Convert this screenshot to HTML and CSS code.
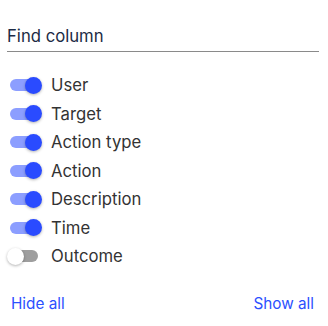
FILE: index.html
```html
<!DOCTYPE html>
<html>
<head>
<meta charset="utf-8">
<link rel="stylesheet" href="styles.css">
</head>
<body>
<div class="panel">
  <div class="search"><input class="search-input" type="text" placeholder="Find column"></div>
  <ul class="cols">
    <li class="col"><span class="switch on"><span class="track"></span><span class="knob"></span></span><span class="label">User</span></li>
    <li class="col"><span class="switch on"><span class="track"></span><span class="knob"></span></span><span class="label">Target</span></li>
    <li class="col"><span class="switch on"><span class="track"></span><span class="knob"></span></span><span class="label">Action type</span></li>
    <li class="col"><span class="switch on"><span class="track"></span><span class="knob"></span></span><span class="label">Action</span></li>
    <li class="col"><span class="switch on"><span class="track"></span><span class="knob"></span></span><span class="label">Description</span></li>
    <li class="col"><span class="switch on"><span class="track"></span><span class="knob"></span></span><span class="label">Time</span></li>
    <li class="col"><span class="switch"><span class="track"></span><span class="knob"></span></span><span class="label">Outcome</span></li>
  </ul>
  <div class="actions">
    <a class="link" href="#">Hide all</a>
    <a class="link" href="#">Show all</a>
  </div>
</div>
</body>
</html>
```
FILE: styles.css
```css
* { box-sizing: border-box; }
html, body { margin: 0; padding: 0; background: #fff; }
body { font-family: Inter, "Noto Sans", sans-serif; }
.panel { width: 328px; height: 326px; padding: 16px 9px 0 7px; }
.search { border-bottom: 1px solid #8a8a8a; height: 36px; }
.search-input {
  border: 0; outline: 0; padding: 5px 0 0 0; margin: 0; width: 100%;
  height: 35px; font-family: inherit; font-size: 16.7px; color: #1c2b45; background: transparent;
}
.search-input::placeholder { color: #1c2b45; opacity: 1; }
.cols { list-style: none; margin: 19px 0 0 0; padding: 0; }
.col { display: flex; align-items: center; height: 28.5px; }
.switch { position: relative; width: 36px; height: 17px; margin-left: 0; margin-right: 8px; flex: none; }
.track { position: absolute; left: 3px; top: 2.5px; width: 28px; height: 12px; border-radius: 6px; background: #9e9e9e; }
.knob { position: absolute; left: 0; top: 0; width: 17px; height: 17px; border-radius: 50%; background: #fff;
  box-shadow: 0 1px 3px rgba(0,0,0,0.3); }
.switch.on .track { background: #8c9eff; }
.switch.on .knob { left: 18px; background: #2a4bff; }
.label { font-size: 16.7px; color: #333; }
.actions { display: flex; justify-content: space-between; margin-top: 23px; padding: 0 5px 0 4px; }
.link { color: #2b50ff; text-decoration: none; font-size: 15.3px; }
```
